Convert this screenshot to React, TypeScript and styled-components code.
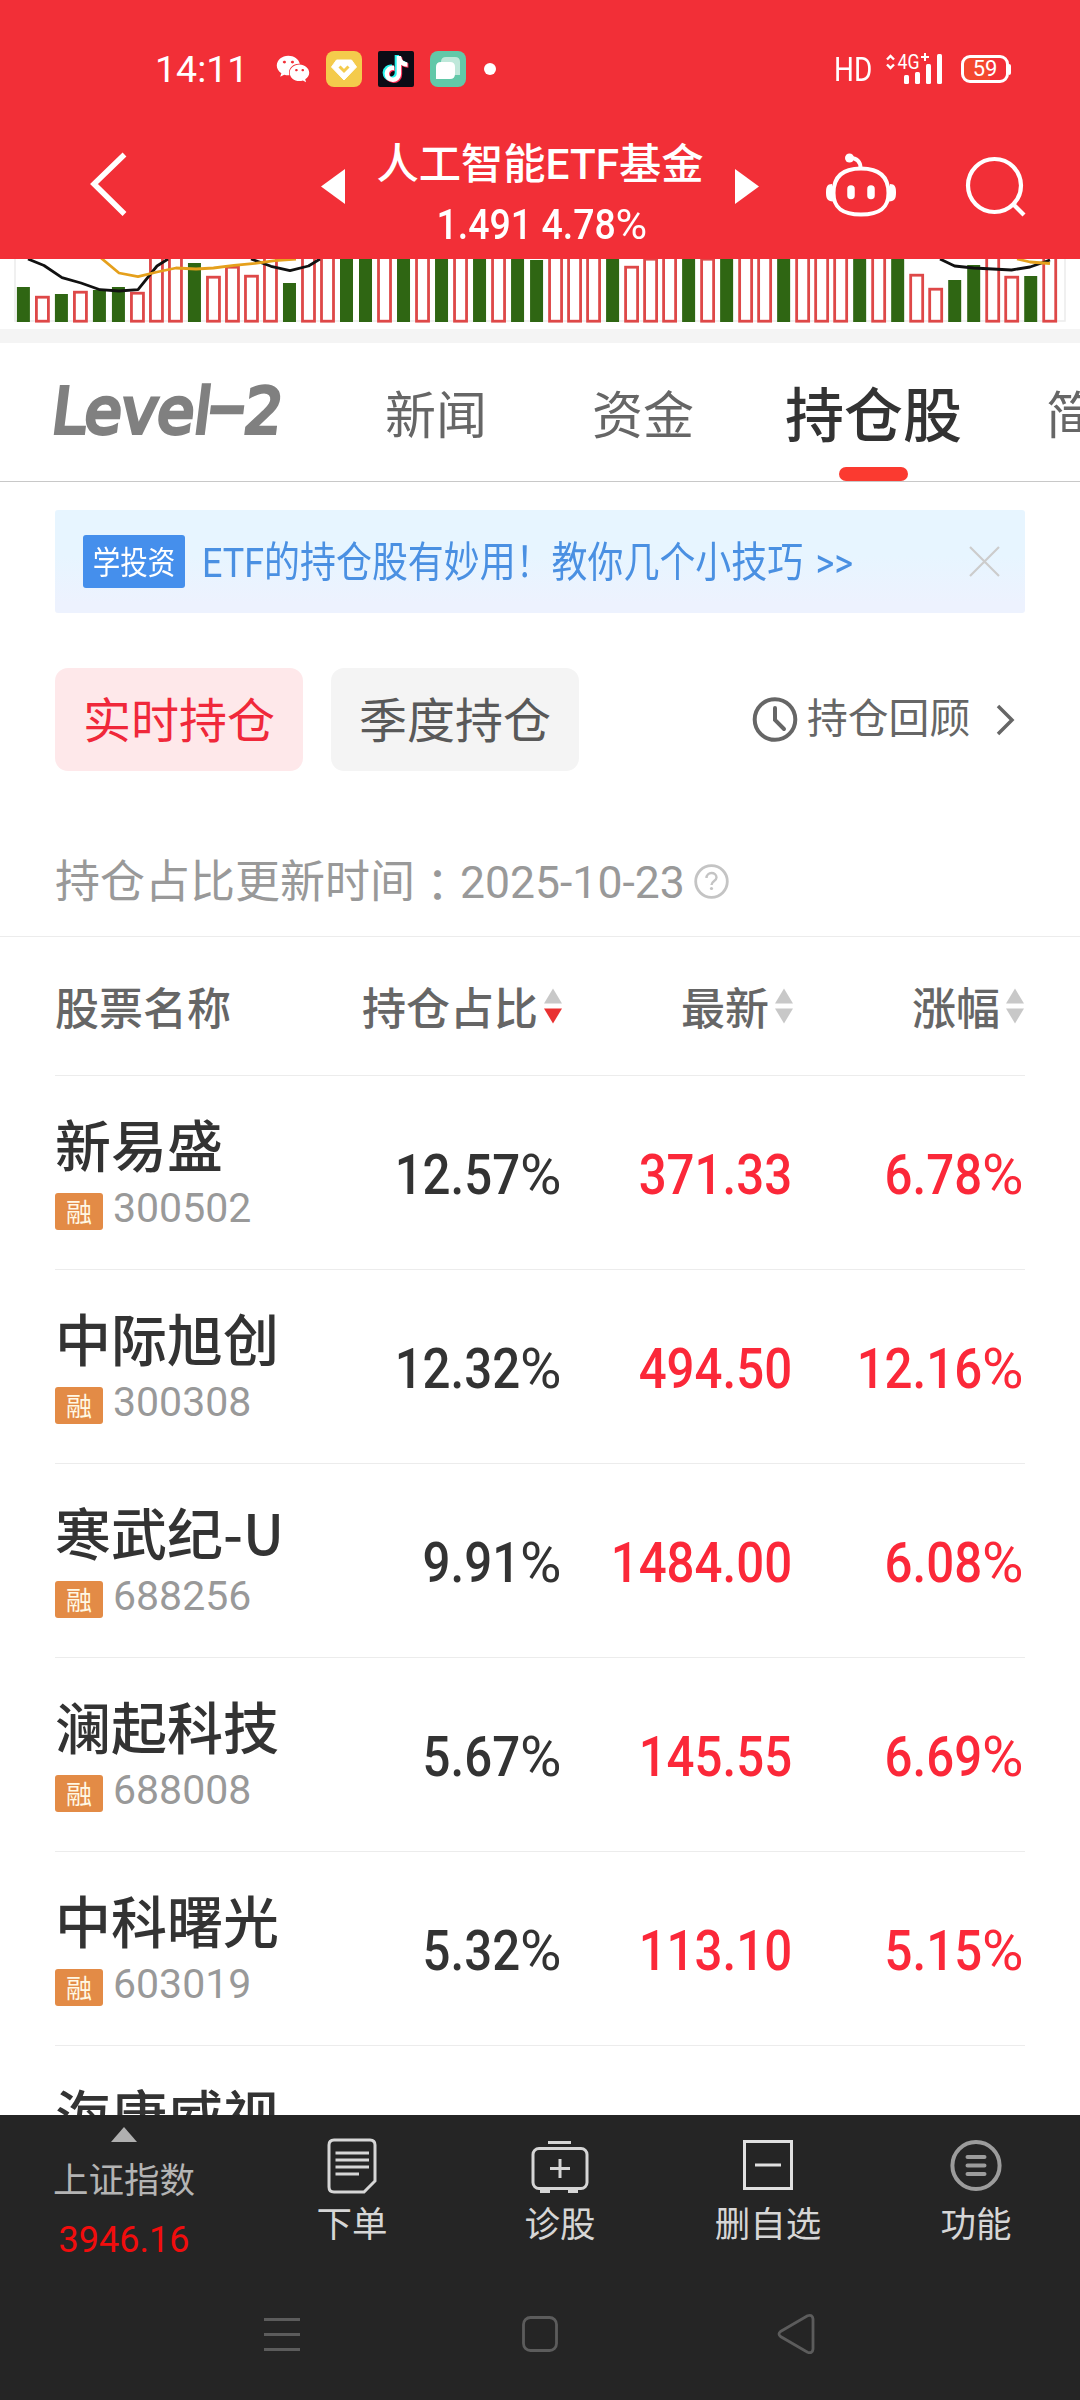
import React from 'react';
import styled, { createGlobalStyle } from 'styled-components';
import { FaWeixin, FaTiktok } from 'react-icons/fa';

const FONT = "Roboto, 'Noto Sans CJK SC', sans-serif";

const GlobalStyle = createGlobalStyle`
  * { box-sizing: border-box; }
  body { margin: 0; background: #fff; font-family: ${FONT}; }
  svg { display: block; flex: none; }
`;

const Screen = styled.div`
  width: 1080px;
  height: 2400px;
  display: flex;
  flex-direction: column;
  overflow: hidden;
  background: #fff;
`;

/* ---------- header ---------- */

const Header = styled.header`
  flex: none;
  height: 259px;
  background: #f22f37;
  color: #fff;
`;

const StatusBar = styled.div`
  display: flex;
  align-items: center;
  height: 138px;
  padding: 0 69px 0 155px;
`;

const Clock = styled.span`
  width: 121px;
  font-size: 37.5px;
  line-height: 44px;
`;

const Notifications = styled.div`
  display: flex;
  align-items: center;
  gap: 16px;
`;

const AppBadge = styled.span<{ $bg: string; $radius: number }>`
  display: flex;
  align-items: center;
  justify-content: center;
  width: 36px;
  height: 36px;
  border-radius: ${(p) => p.$radius}px;
  background: ${(p) => p.$bg};
`;

const TikTokGlyph = styled(FaTiktok)`
  color: #fff;
  font-size: 26px;
  filter: drop-shadow(-1.5px -1px 0 #25f4ee) drop-shadow(1.5px 1px 0 #fe2c55);
`;

const Dot = styled.i`
  width: 12px;
  height: 12px;
  margin-left: 2px;
  border-radius: 50%;
  background: #fff;
`;

const Signals = styled.div`
  display: flex;
  align-items: center;
  margin-left: auto;
`;

const HdLabel = styled.span`
  width: 52px;
  font-size: 34px;
  line-height: 40px;
  transform: scaleX(0.82);
  transform-origin: left center;
`;

const Battery = styled.div`
  display: flex;
  align-items: center;
  margin-left: 19px;
`;

const BatteryBody = styled.span`
  display: flex;
  align-items: center;
  justify-content: center;
  width: 48px;
  height: 28px;
  border: 3px solid #fff;
  border-radius: 9px;
  background: linear-gradient(90deg, #f4482f 62%, #f22f37 62%);
  font-size: 22px;
  line-height: 22px;
`;

const BatteryCap = styled.i`
  width: 2px;
  height: 11px;
  border-radius: 0 2px 2px 0;
  background: #fff;
`;

const NavBar = styled.div`
  display: grid;
  grid-template-columns: 320px 26px 388px 26px 320px;
  grid-template-rows: 96px;
  align-items: center;
  height: 96px;
`;

const BackSlot = styled.div`
  padding-left: 88px;
`;

const TitleBlock = styled.div`
  display: flex;
  flex-direction: column;
  align-items: center;
  align-self: start;
  margin-top: -4px;
`;

const Title = styled.h1`
  margin: 0;
  font-size: 42.3px;
  font-weight: 500;
  line-height: 61px;
  white-space: nowrap;
`;

const Quote = styled.div`
  padding-left: 3px;
  font-size: 42px;
  font-weight: 500;
  line-height: 60px;
  white-space: nowrap;
  transform: scaleX(0.893);
`;

const Percent = styled.span`
  display: inline-block;
  margin-left: 0.1em;
  font-weight: 400;
  transform: scaleX(1.15);
  transform-origin: right center;
`;

const Actions = styled.div`
  display: flex;
  align-items: center;
  gap: 66px;
  padding-left: 64px;
`;

/* ---------- scrolling body ---------- */

const Body = styled.main`
  flex: none;
  height: 1856px;
  overflow: hidden;
`;

const Band = styled.div`
  height: 14px;
  background: #f4f4f4;
`;

const Tabs = styled.nav`
  display: grid;
  grid-template-columns: 330px 207px 193px 261px 89px;
  height: 139px;
  padding-left: 55px;
  overflow: hidden;
  border-bottom: 1px solid #c8c8c8;
`;

const Logo = styled.span`
  font-family: 'DejaVu Sans', sans-serif;
  font-size: 63px;
  line-height: 138px;
  color: #808080;
  white-space: nowrap;
  -webkit-text-stroke: 4px #808080;
  transform: translateX(-3px) skewX(-7deg) scaleX(0.955);
  transform-origin: left center;
`;

const LogoDash = styled.span`
  display: inline-block;
  margin: 0 7px 0 5px;
  transform: translateY(-6px) scaleX(1.7);
`;

const Tab = styled.span`
  font-size: 51px;
  line-height: 147px;
  color: #666;
  white-space: nowrap;
`;

const ActiveTab = styled.span`
  display: flex;
  flex-direction: column;
  align-items: center;
  width: 177px;
  font-size: 59px;
  font-weight: 500;
  line-height: 124px;
  padding-top: 12px;
  height: 138px;
  color: #333;
  white-space: nowrap;

  &::after {
    content: '';
    flex: none;
    width: 69px;
    height: 14px;
    margin-top: -12px;
    border-radius: 7px;
    background: #fb3a30;
  }
`;

const Banner = styled.div`
  display: flex;
  align-items: center;
  width: 970px;
  height: 103px;
  margin: 28px 55px 0;
  padding: 0 25px 0 28px;
  border-radius: 3px;
  background: linear-gradient(180deg, #e7f5ff 45%, #edf2fe 90%);
`;

const BannerTag = styled.span`
  display: flex;
  justify-content: center;
  flex: none;
  width: 102px;
  height: 53px;
  border-radius: 3px;
  background: #458fec;
  color: #fff;
  font-size: 32px;
  line-height: 56px;
  white-space: nowrap;

  span {
    flex: none;
    transform: scaleX(0.86);
  }
`;

const BannerText = styled.span`
  flex: 1;
  margin-left: 17px;
  padding-top: 2px;
  font-size: 41.5px;
  line-height: 60px;
  word-spacing: 4px;
  color: #4a90e2;
  white-space: nowrap;
  transform: scaleX(0.866);
  transform-origin: left center;
`;

const FilterRow = styled.div`
  display: flex;
  align-items: center;
  height: 103px;
  margin: 55px 55px 0;
`;

const Pill = styled.button<{ $active?: boolean }>`
  width: 248px;
  height: 103px;
  margin: 0 28px 0 0;
  padding: 0;
  border: 0;
  border-radius: 13px;
  background: ${(p) => (p.$active ? '#fee8ea' : '#f4f4f4')};
  color: ${(p) => (p.$active ? '#f0283a' : '#595959')};
  font: 400 48px/107px ${FONT};
  white-space: nowrap;
`;

const Review = styled.div`
  display: flex;
  align-items: center;
  margin-left: auto;
  padding-right: 10px;
  font-size: 40.8px;
  line-height: 98px;
  color: #666;
`;

const ReviewLabel = styled.span`
  width: 166px;
  margin: -2px 23px 0 9px;
  white-space: nowrap;
`;

const UpdateRow = styled.div`
  display: flex;
  align-items: center;
  height: 166px;
  padding: 58px 55px 0;
  border-bottom: 1px solid #ececec;
  font-size: 45px;
  line-height: 60px;
  color: #999;
  white-space: nowrap;

  svg {
    margin-bottom: 3px;
  }
`;

const WideColon = styled.span`
  font-family: 'Noto Sans CJK TC', sans-serif;
  line-height: 1;
`;

const UpdateDate = styled.span`
  width: 234px;
  font-size: 44.5px;
`;

const Table = styled.section`
  margin: 0 55px;
`;

const Columns = styled.div`
  display: grid;
  grid-template-columns: 277px 231px 231px 231px;
  border-bottom: 1px solid #ececec;
`;

const HeadRow = styled(Columns)`
  height: 139px;
  font-size: 44px;
  font-weight: 500;
  line-height: 60px;
  color: #666;
`;

const HeadCell = styled.div<{ $end?: boolean }>`
  display: flex;
  align-items: center;
  justify-content: ${(p) => (p.$end ? 'flex-end' : 'flex-start')};
  gap: 5px;
  height: 138px;
  padding-top: 7px;
  white-space: nowrap;

  svg {
    margin-bottom: 8px;
  }
`;

const StockRow = styled(Columns)`
  height: 194px;
`;

const StockInfo = styled.div`
  padding-top: 31px;
`;

const StockName = styled.div`
  font-family: 'Noto Sans CJK SC', sans-serif;
  font-size: 56px;
  font-weight: 500;
  line-height: 72px;
  color: #333;
  white-space: nowrap;
`;

const StockMeta = styled.div`
  display: flex;
  align-items: center;
  gap: 10px;
  height: 46px;
  margin-top: 6px;
`;

const MarginTag = styled.span`
  width: 48px;
  height: 37px;
  margin-top: 6px;
  border-radius: 3px;
  background: #e38b46;
  color: #fff8e4;
  font-size: 26px;
  line-height: 41px;
  text-align: center;
`;

const StockCode = styled.span`
  font-size: 41px;
  line-height: 46px;
  color: #999;
`;

const Figure = styled.div<{ $up?: boolean }>`
  padding-right: 2px;
  font-size: 55px;
  font-weight: 500;
  line-height: 198px;
  text-align: right;
  white-space: nowrap;
  color: ${(p) => (p.$up ? '#fb2839' : '#333')};
  transform: scaleX(0.895);
  transform-origin: right center;
`;

/* ---------- bottom ---------- */

const Toolbar = styled.footer`
  display: grid;
  grid-template-columns: 248px repeat(4, 208px);
  flex: none;
  height: 155px;
  background: #252525;
`;

const IndexCell = styled.div`
  display: flex;
  flex-direction: column;
  align-items: center;
  padding-top: 12px;
  color: #b4b4b4;
  font-size: 35.5px;
  line-height: 50px;
  white-space: nowrap;

  svg {
    margin-bottom: 14px;
  }
`;

const IndexValue = styled.span`
  margin-top: 9px;
  font-size: 36px;
  color: #f20d0d;
`;

const ToolItem = styled.div`
  display: flex;
  flex-direction: column;
  align-items: center;
  padding-top: 20px;
  color: #d6d6d6;
  font-size: 35.5px;
  line-height: 50px;
  white-space: nowrap;

  svg {
    margin-bottom: 3px;
  }
`;

const SystemNav = styled.div`
  display: grid;
  grid-template-columns: 264px 258px 254px 304px;
  align-items: center;
  flex: none;
  height: 130px;
  padding-bottom: 2px;
  background: #252525;
`;

/* ---------- data ---------- */

type Bar = [up: 0 | 1, top: number];

// Visible top of every volume bar; zero or less reaches the upper edge.
const BARS: Bar[] = [
  [0, 28], [1, 37], [0, 35], [1, 32], [0, 31], [0, 28], [1, 33], [1, -4], [1, -4], [0, 4],
  [1, 17], [1, 7], [1, 16], [1, -4], [0, 24], [1, -4], [1, -4], [0, 0], [0, 0], [1, -4],
  [0, 0], [1, -4], [0, 0], [1, -4], [0, 0], [1, -4], [0, 0], [0, 1], [1, -4], [1, -4],
  [1, -4], [0, 0], [1, 7], [1, -1], [1, -4], [0, 0], [1, -1], [0, 0], [1, -4], [1, -4],
  [0, 0], [1, -4], [1, -4], [1, -4], [0, 0], [1, -4], [0, 0], [1, 15], [1, 29], [0, 21],
  [0, 6], [1, -4], [1, 17], [0, 17], [1, -4],
];

const STOCKS = [
  { name: '新易盛', code: '300502', share: '12.57', price: '371.33', change: '6.78' },
  { name: '中际旭创', code: '300308', share: '12.32', price: '494.50', change: '12.16' },
  { name: '寒武纪-U', code: '688256', share: '9.91', price: '1484.00', change: '6.08' },
  { name: '澜起科技', code: '688008', share: '5.67', price: '145.55', change: '6.69' },
  { name: '中科曙光', code: '603019', share: '5.32', price: '113.10', change: '5.15' },
];

/* ---------- drawings ---------- */

const VolumeChart = () => (
  <svg width="1080" height="70" viewBox="0 0 1080 70" fill="none">
    <path d="M15 0V62H1065V0" stroke="#ececec" strokeWidth="1.5" />
    {BARS.map(([up, top], i) => {
      const cx = 23.4 + i * 19.006;
      return up ? (
        <rect key={i} x={cx - 6} y={top + 1.2} width="12" height={61 - top} fill="#fff" stroke="#de4848" strokeWidth="2.8" />
      ) : (
        <rect key={i} x={cx - 6.5} y={top} width="13" height={63 - top} fill="#2f6613" />
      );
    })}
    <g strokeWidth="2.8" strokeLinejoin="round">
      <g stroke="#111">
        <path d="M28 0L44 6.5L62 18.7L81 24L100 30.7L119 32L138 30.7L157 7L168 0" />
        <path d="M251 0L271 7.3L290 11.7L308.500 7L320 0" />
        <path d="M940 0L954.600 7L973.500 9L1011.500 11L1030 8L1044.500 3L1050 1" />
      </g>
      <g stroke="#e5a01c">
        <path d="M101 -1L119 14L138 17.700L157 13L176 9L196 10L213.500 9L234 6.300L255 4.300L275 1.700L296 0" />
        <path d="M1017 0L1030 3L1050 4.500" />
      </g>
    </g>
  </svg>
);

const SignalIcon = () => (
  <svg width="56" height="34" viewBox="0 -4 56 34">
    <path d="M1 5.500L4.500 2L8 5.500M1 10.500L4.500 14L8 10.500" fill="none" stroke="#fff" strokeWidth="2.4" />
    <text x="11.500" y="14.500" fontSize="20" fill="#fff" textLength="22" lengthAdjust="spacingAndGlyphs">4G</text>
    <path d="M35 3H43M39 -1V7" stroke="#fff" strokeWidth="2" />
    <g fill="#fff">
      <rect x="18" y="21" width="5" height="9" rx="1.500" />
      <rect x="29" y="18" width="5" height="12" rx="1.500" />
      <rect x="40" y="10" width="5" height="20" rx="1.500" />
      <rect x="51" y="0" width="5" height="30" rx="1.500" />
    </g>
  </svg>
);

const SignalSlot = styled.span`
  margin-top: -4px;
`;

const DiamondIcon = () => (
  <svg width="36" height="36" viewBox="0 0 36 36">
    <path d="M10.500 9H25.500L30.500 16L18 29L5.500 16Z" fill="#fff" stroke="#fff" strokeWidth="1" strokeLinejoin="round" />
    <path d="M13.500 15.500L18 20L22.500 15.500" fill="none" stroke="#f4cb4c" strokeWidth="3" />
  </svg>
);

const CardsIcon = () => (
  <svg width="36" height="36" viewBox="0 0 36 36">
    <path d="M16 6H25Q30 6 30 11V24H11V11Q11 6 16 6Z" fill="#bfe8da" />
    <path d="M11 11H20Q25 11 25 16V23Q25 28 20 28H6V16Q6 11 11 11Z" fill="#fff" />
  </svg>
);

const BackIcon = () => (
  <svg width="40" height="70" viewBox="0 0 40 70" fill="none" stroke="#fff" strokeWidth="5.500">
    <path d="M36.500 3.500L6 33L36.500 63" />
  </svg>
);

const Arrow = ({ right }: { right?: boolean }) => (
  <svg width="26" height="36" viewBox="0 0 26 36" fill="#fff">
    <path d={right ? 'M1 1L25 18.500L1 36Z' : 'M25 1L1 18.500L25 36Z'} />
  </svg>
);

const RobotIcon = () => (
  <svg width="74" height="66" viewBox="0 0 74 66" fill="none" stroke="#fff">
    <path d="M37 15.500C53 15.500 64.500 22 64.500 40C64.500 55 56 61.500 37 61.500C18 61.500 9.500 55 9.500 40C9.500 22 21 15.500 37 15.500Z" strokeWidth="4" />
    <path d="M26 5C33 5 36.500 9 36.500 15" strokeWidth="4" />
    <circle cx="25.500" cy="5" r="4.500" fill="#fff" stroke="none" />
    <path d="M8 31C3 31 2 34 2 39.500C2 45 3 48 9 48.500Z" fill="#fff" stroke="none" />
    <path d="M66 31C71 31 72 34 72 39.500C72 45 71 48 65 48.500Z" fill="#fff" stroke="none" />
    <path d="M27 36V42.500M47 36V42.500" strokeWidth="7.500" strokeLinecap="round" />
  </svg>
);

const SearchIcon = () => (
  <svg width="64" height="64" viewBox="0 0 64 64" fill="none" stroke="#fff" strokeWidth="4.200">
    <circle cx="30.500" cy="31.500" r="26.500" />
    <path d="M49 50L60 61" />
  </svg>
);

const CloseIcon = () => (
  <svg width="31" height="31" viewBox="0 0 31 31" stroke="#ccc" strokeWidth="2.200">
    <path d="M1 1L30 30M30 1L1 30" />
  </svg>
);

const HistoryIcon = () => (
  <svg width="46" height="46" viewBox="0 0 46 46" fill="none" stroke="#666" strokeWidth="4">
    <circle cx="23" cy="22.500" r="20.300" />
    <path d="M23 11V23L32 32" strokeLinecap="round" />
  </svg>
);

const ChevronIcon = () => (
  <svg width="19" height="32" viewBox="0 0 19 32" fill="none" stroke="#666" strokeWidth="3.500">
    <path d="M2 2L16 16L2 30" />
  </svg>
);

const HelpIcon = () => (
  <svg width="35" height="35" viewBox="0 0 35 35" fill="none" stroke="#c4c4c4" strokeWidth="2.800">
    <circle cx="17.500" cy="17.500" r="15.800" />
    <path d="M12.500 14C12.500 7.500 22.500 7.500 22.500 13.500C22.500 17 17.500 17 17.500 21" strokeWidth="2.400" />
    <circle cx="17.500" cy="24.500" r="1.600" fill="#c4c4c4" stroke="none" />
  </svg>
);

const SortIcon = ({ active }: { active?: boolean }) => (
  <svg width="20" height="36" viewBox="0 0 20 36">
    <path d="M1 15.500L10 0.500L19 15.500Z" fill="#c8c8c8" />
    <path d="M1 20.500L10 35.500L19 20.500Z" fill={active ? '#e93131' : '#c8c8c8'} />
  </svg>
);

const OrderIcon = () => (
  <svg width="60" height="62" viewBox="0 0 60 62" fill="none" stroke="#d6d6d6" strokeWidth="3">
    <path d="M12 5H48Q53 5 53 10V46L42 57H12Q7 57 7 52V10Q7 5 12 5Z" />
    <path d="M13.500 18H47M13.500 25H47M13.500 32H47M13.500 39H37" />
  </svg>
);

const DiagnoseIcon = () => (
  <svg width="60" height="62" viewBox="0 0 60 62" fill="none" stroke="#d6d6d6" strokeWidth="3">
    <rect x="3" y="13.500" width="54" height="40" rx="6" />
    <path d="M18 7.500H41M30 24V43M20 33.500H40" />
    <path d="M10 56.500H20M38 56.500H48" />
  </svg>
);

const RemoveIcon = () => (
  <svg width="60" height="62" viewBox="0 0 60 62" fill="none" stroke="#e0e0e0" strokeWidth="3">
    <rect x="6.500" y="6.500" width="47" height="47" />
    <path d="M17 30H43" />
  </svg>
);

const MoreIcon = () => (
  <svg width="60" height="62" viewBox="0 0 60 62" fill="none" stroke="#9c9c9c" strokeWidth="4">
    <circle cx="30" cy="30.500" r="23.600" />
    <path d="M21.500 22H38.500M21.500 30.500H38.500M21.500 39H38.500" strokeLinecap="round" />
  </svg>
);

const UpIcon = () => (
  <svg width="26" height="15" viewBox="0 0 26 15" fill="#b0b0b0">
    <path d="M0 15L13 0L26 15Z" />
  </svg>
);

const MenuKey = () => (
  <svg width="36" height="36" viewBox="0 0 36 36" stroke="#5c5c5c" strokeWidth="3">
    <path d="M0 3.500H36M0 18.500H36M0 33.500H36" />
  </svg>
);

const HomeKey = () => (
  <svg width="36" height="36" viewBox="0 0 36 36" fill="none" stroke="#5c5c5c" strokeWidth="2.800">
    <rect x="1.500" y="1.500" width="33" height="33" rx="7" />
  </svg>
);

const BackKey = () => (
  <svg width="40" height="42" viewBox="0 0 40 42" fill="none" stroke="#5c5c5c" strokeWidth="2.800">
    <path d="M4.500 18.500L31.500 2.800Q36.500 1 37 6V36Q36.500 41 31.500 39.200L4.500 23.500Q1.500 21 4.500 18.500Z" />
  </svg>
);

/* ---------- page ---------- */

export default function App() {
  return (
    <Screen>
      <GlobalStyle />
      <Header>
        <StatusBar>
          <Clock>14:11</Clock>
          <Notifications>
            <FaWeixin size={34} />
            <AppBadge $bg="#f4cb4c" $radius={8}><DiamondIcon /></AppBadge>
            <AppBadge $bg="#0b0b15" $radius={2}><TikTokGlyph /></AppBadge>
            <AppBadge $bg="#62c8a8" $radius={8}><CardsIcon /></AppBadge>
            <Dot />
          </Notifications>
          <Signals>
            <HdLabel>HD</HdLabel>
            <SignalSlot><SignalIcon /></SignalSlot>
            <Battery>
              <BatteryBody>59</BatteryBody>
              <BatteryCap />
            </Battery>
          </Signals>
        </StatusBar>
        <NavBar>
          <BackSlot><BackIcon /></BackSlot>
          <Arrow />
          <TitleBlock>
            <Title>人工智能ETF基金</Title>
            <Quote>1.491 4.78<Percent>%</Percent></Quote>
          </TitleBlock>
          <Arrow right />
          <Actions>
            <RobotIcon />
            <SearchIcon />
          </Actions>
        </NavBar>
      </Header>

      <Body>
        <VolumeChart />
        <Band />
        <Tabs>
          <Logo>Level<LogoDash>-</LogoDash>2</Logo>
          <Tab>新闻</Tab>
          <Tab>资金</Tab>
          <ActiveTab>持仓股</ActiveTab>
          <Tab>简况</Tab>
        </Tabs>
        <Banner>
          <BannerTag><span>学投资</span></BannerTag>
          <BannerText>ETF的持仓股有妙用！教你几个小技巧 &gt;&gt;</BannerText>
          <CloseIcon />
        </Banner>
        <FilterRow>
          <Pill $active>实时持仓</Pill>
          <Pill>季度持仓</Pill>
          <Review>
            <HistoryIcon />
            <ReviewLabel>持仓回顾</ReviewLabel>
            <ChevronIcon />
          </Review>
        </FilterRow>
        <UpdateRow>
          <span>持仓占比更新时间</span>
          <WideColon>：</WideColon>
          <UpdateDate>2025-10-23</UpdateDate>
          <HelpIcon />
        </UpdateRow>
        <Table>
          <HeadRow>
            <HeadCell>股票名称</HeadCell>
            <HeadCell $end>持仓占比<SortIcon active /></HeadCell>
            <HeadCell $end>最新<SortIcon /></HeadCell>
            <HeadCell $end>涨幅<SortIcon /></HeadCell>
          </HeadRow>
          {STOCKS.map((s) => (
            <StockRow key={s.code}>
              <StockInfo>
                <StockName>{s.name}</StockName>
                <StockMeta>
                  <MarginTag>融</MarginTag>
                  <StockCode>{s.code}</StockCode>
                </StockMeta>
              </StockInfo>
              <Figure>{s.share}<Percent>%</Percent></Figure>
              <Figure $up>{s.price}</Figure>
              <Figure $up>{s.change}<Percent>%</Percent></Figure>
            </StockRow>
          ))}
          <StockInfo>
            <StockName>海康威视</StockName>
          </StockInfo>
        </Table>
      </Body>

      <Toolbar>
        <IndexCell>
          <UpIcon />
          上证指数
          <IndexValue>3946.16</IndexValue>
        </IndexCell>
        <ToolItem><OrderIcon />下单</ToolItem>
        <ToolItem><DiagnoseIcon />诊股</ToolItem>
        <ToolItem><RemoveIcon />删自选</ToolItem>
        <ToolItem><MoreIcon />功能</ToolItem>
      </Toolbar>
      <SystemNav>
        <span />
        <MenuKey />
        <HomeKey />
        <BackKey />
      </SystemNav>
    </Screen>
  );
}
